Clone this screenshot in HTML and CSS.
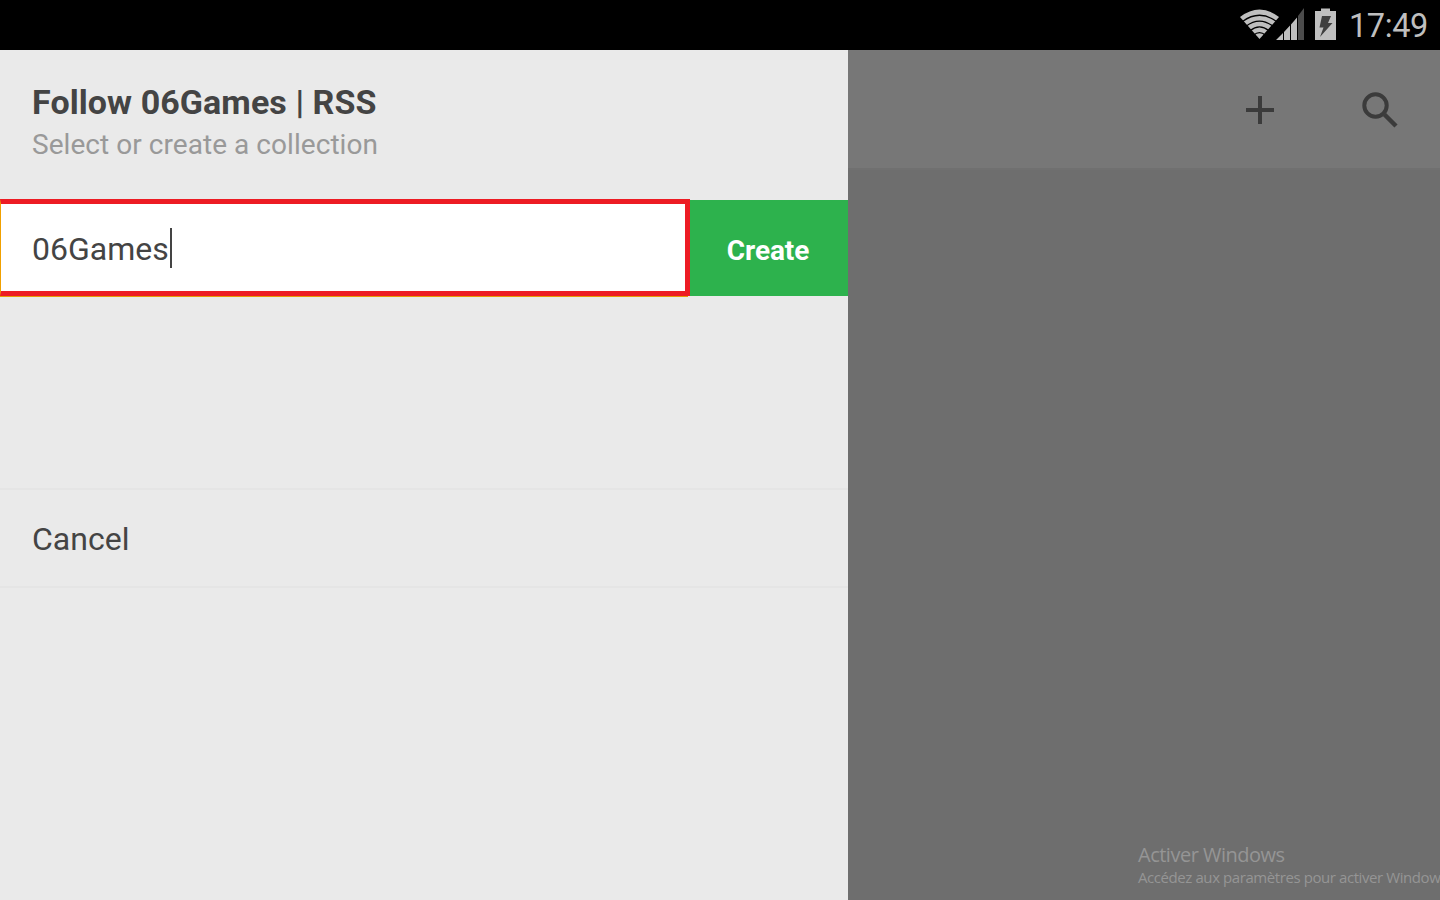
FILE: index.html
```html
<!DOCTYPE html>
<html lang="en">
<head>
<meta charset="utf-8">
<title>Follow 06Games | RSS</title>
<link rel="stylesheet" href="styles.css">
</head>
<body>
<header class="status">
  <svg class="status-icons" width="100" height="50" viewBox="1240 0 100 50">
    <path fill="#bfbfbf" d="M1240 17Q1259.500 2 1279 17L1259.500 39Z"/>
    <g fill="none" stroke="#000" stroke-width="1.300">
      <path d="M1242.500 21.500Q1259.500 9 1276.500 21.500"/>
      <path d="M1246 26.200Q1259.500 16 1273 26.200"/>
      <path d="M1250 30.800Q1259.500 23 1269 30.800"/>
      <path d="M1253.500 35.200Q1259.500 30 1265.500 35.200"/>
    </g>
    <path fill="#bfbfbf" d="M1276 40L1283 33V40ZM1284 32L1290 25.500V40H1284ZM1291 24.500L1297 17.500V40H1291Z"/>
    <path fill="#4c4c4c" d="M1298 16L1304 8V40H1298Z"/>
    <path fill="#bfbfbf" d="M1315 11H1321V8.500H1330V11H1336V40H1315Z"/>
    <path fill="#3f3f3f" d="M1322 16H1331L1328 23H1332.500L1320 37L1323.500 27.500H1319.500Z"/>
  </svg>
  <span class="clock">17:49</span>
</header>
<main class="screen">
  <section class="panel">
    <div class="heading">
      <h1 class="title">Follow 06Games | RSS</h1>
      <p class="subtitle">Select or create a collection</p>
    </div>
    <div class="create-row">
      <div class="field"><span class="value">06Games</span><span class="caret"></span></div>
      <div class="create">Create</div>
    </div>
    <div class="cancel">Cancel</div>
  </section>
  <section class="backdrop">
    <div class="toolbar">
      <svg width="28" height="28" viewBox="0 0 28 28"><path fill="#3b3b3b" d="M12 0h4v12h12v4H16v12h-4V16H0v-4h12z"/></svg>
      <svg width="36" height="36" viewBox="0 0 36 36" fill="none" stroke="#3b3b3b" stroke-width="4"><circle cx="13.500" cy="13.500" r="11.200"/><path d="M22.500 22.500L34 34" stroke-width="4.500"/></svg>
    </div>
    <div class="notice">
      <div class="notice-title">Activer Windows</div>
      <div class="notice-text">Accédez aux paramètres pour activer Window</div>
    </div>
  </section>
</main>
</body>
</html>
```
FILE: styles.css
```css
* { box-sizing: border-box; }
body {
  margin: 0;
  width: 1440px;
  height: 900px;
  overflow: hidden;
  font-family: Roboto, sans-serif;
  color: #444;
}
.status {
  display: flex;
  justify-content: flex-end;
  height: 50px;
  padding-right: 12px;
  background: #000;
}
.status-icons { flex: none; }
.clock {
  width: 88px;
  padding-left: 9px;
  font-size: 32.5px;
  letter-spacing: -0.4px;
  line-height: 53px;
  color: #bfbfbf;
  white-space: nowrap;
}
.screen { display: flex; height: 850px; }
.panel { width: 848px; background: #eaeaea; }
.heading { height: 149px; padding: 32px 32px 0; }
.title { margin: 0; font-size: 34px; letter-spacing: 0.08px; line-height: 40px; font-weight: 700; white-space: nowrap; }
.subtitle { margin: 5px 0 0; font-size: 28px; letter-spacing: 0.05px; line-height: 36px; color: #999; white-space: nowrap; }
.create-row { display: flex; align-items: flex-start; height: 98px; }
.field {
  display: flex;
  align-items: center;
  width: 690px;
  height: 97px;
  padding-left: 31px;
  border: 5px solid #ed1c24;
  border-left: 1px solid #f0a000;
  background: #fff;
  box-shadow: -2px 1px 0 #e79b09;
  font-size: 32px;
}
.value { padding-top: 2px; }
.caret { width: 2px; height: 40px; margin-left: 1px; background: #444; }
.create {
  width: 158px;
  height: 96px;
  margin-top: 1px;
  padding-right: 2px;
  background: #2db24d;
  color: #fff;
  font-size: 28px;
  letter-spacing: -0.1px;
  font-weight: 700;
  line-height: 102px;
  text-align: center;
}
.cancel {
  height: 100px;
  margin-top: 191px;
  padding-left: 32px;
  border-top: 2px solid #e5e5e5;
  border-bottom: 2px solid #e5e5e5;
  font-size: 32px;
  line-height: 98px;
}
.backdrop {
  display: flex;
  flex-direction: column;
  justify-content: space-between;
  width: 592px;
  background: #6e6e6e;
}
.toolbar {
  display: flex;
  align-items: center;
  justify-content: flex-end;
  gap: 88px;
  height: 120px;
  padding: 2px 42px 0 0;
  background: #777;
  border-bottom: 2px solid #707070;
}
.notice {
  height: 60px;
  padding-left: 290px;
  overflow: hidden;
  font-family: "Segoe UI", "Open Sans", sans-serif;
  color: #959595;
  white-space: nowrap;
}
.notice-title { font-size: 20px; letter-spacing: -0.5px; line-height: 30px; }
.notice-text { font-size: 15px; letter-spacing: -0.42px; line-height: 15px; }
```
